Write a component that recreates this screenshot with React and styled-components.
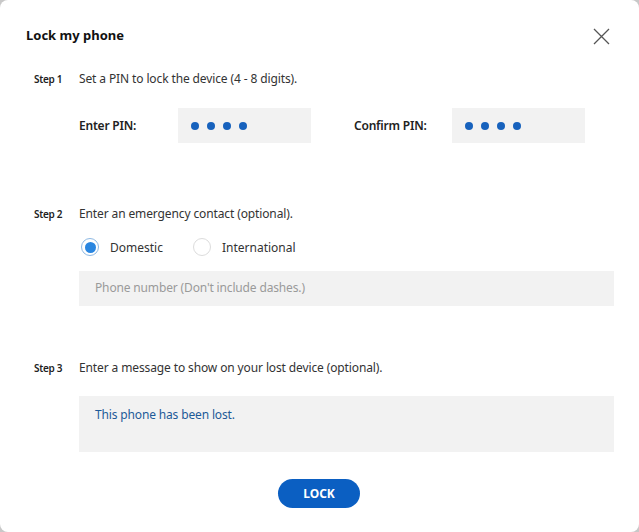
import React from "react";
import styled, { createGlobalStyle } from "styled-components";

const Global = createGlobalStyle`
  html, body { margin: 0; padding: 0; background: #c8c8c8; }
  body { font-family: "Noto Sans", Roboto, sans-serif; color: #252525; }
  * { box-sizing: border-box; }
`;

const Dialog = styled.div`
  width: 639px;
  height: 532px;
  background: #fff;
  border-radius: 8px;
  padding: 25px 29px 0 26px;
  display: flex;
  flex-direction: column;
`;

const Header = styled.div`
  display: flex;
  align-items: center;
  justify-content: space-between;
  height: 20px;
`;

const Title = styled.h1`
  margin: 0;
  font-size: 13px;
  font-weight: 700;
  line-height: 20px;
  color: #111;
`;

const CloseBtn = styled.button`
  width: 17px;
  height: 17px;
  padding: 0;
  border: 0;
  background: none;
  margin-top: 2px;
  display: flex;
`;

const Step = styled.section`
  display: grid;
  grid-template-columns: 45px 1fr;
  margin-left: 8px;
  margin-top: ${(p) => p.$top}px;
`;

const StepLabel = styled.div`
  font-size: 10px;
  font-weight: 600;
  line-height: 18px;
  color: #222;
  letter-spacing: -0.3px;
`;

const StepText = styled.div`
  font-size: 12px;
  line-height: 18px;
  color: #333;
  letter-spacing: -0.12px;
`;

const Content = styled.div`
  grid-column: 2;
  margin-top: ${(p) => p.$top}px;
`;

const PinRow = styled.div`
  display: flex;
  align-items: center;
  height: 35px;
`;

const PinLabel = styled.label`
  width: ${(p) => p.$w}px;
  font-size: 12px;
  font-weight: 600;
  color: #222;
  letter-spacing: -0.2px;
`;

const PinBox = styled.div`
  width: 133px;
  height: 35px;
  background: #f2f2f2;
  display: flex;
  align-items: center;
  gap: 8px;
  padding-left: 13px;
  margin-right: ${(p) => p.$mr || 0}px;
`;

const Dot = styled.span`
  width: 8px;
  height: 8px;
  border-radius: 50%;
  background: #1762bd;
`;

const RadioRow = styled.div`
  display: flex;
  align-items: center;
  height: 18px;
  padding-left: 2px;
`;

const Radio = styled.span`
  width: 18px;
  height: 18px;
  border-radius: 50%;
  border: 1.5px solid ${(p) => (p.$on ? "#8db8e3" : "#dcdcdc")};
  display: flex;
  align-items: center;
  justify-content: center;
  margin-right: 11px;
  &::after {
    content: "";
    width: 11px;
    height: 11px;
    border-radius: 50%;
    background: ${(p) => (p.$on ? "#2a86e0" : "transparent")};
  }
`;

const RadioText = styled.span`
  font-size: 12px;
  color: #333;
  margin-right: ${(p) => p.$mr || 0}px;
`;

const Field = styled.div`
  width: 535px;
  height: ${(p) => p.$h}px;
  background: #f2f2f2;
  padding: ${(p) => p.$pt}px 16px 0;
  font-size: 12px;
  line-height: 18px;
  letter-spacing: -0.15px;
  color: ${(p) => p.$color};
`;

const Footer = styled.div`
  display: flex;
  justify-content: center;
  margin-top: 27px;
  padding-left: 2px;
`;

const LockBtn = styled.button`
  width: 82px;
  height: 29px;
  border: 0;
  border-radius: 15px;
  background: #0b5fc2;
  color: #fff;
  font-family: inherit;
  font-size: 12px;
  font-weight: 700;
`;

export default function App() {
  return (
    <>
      <Global />
      <Dialog>
        <Header>
          <Title>Lock my phone</Title>
          <CloseBtn aria-label="Close">
            <svg width="17" height="17" viewBox="0 0 17 17">
              <path d="M1 1L16 16M16 1L1 16" stroke="#555" strokeWidth="1.3" fill="none" />
            </svg>
          </CloseBtn>
        </Header>

        <Step $top={25}>
          <StepLabel>Step 1</StepLabel>
          <StepText>Set a PIN to lock the device (4 - 8 digits).</StepText>
          <Content $top={20}>
            <PinRow>
              <PinLabel $w={99}>Enter PIN:</PinLabel>
              <PinBox $mr={43}>
                <Dot /><Dot /><Dot /><Dot />
              </PinBox>
              <PinLabel $w={98}>Confirm PIN:</PinLabel>
              <PinBox>
                <Dot /><Dot /><Dot /><Dot />
              </PinBox>
            </PinRow>
          </Content>
        </Step>

        <Step $top={62}>
          <StepLabel>Step 2</StepLabel>
          <StepText>Enter an emergency contact (optional).</StepText>
          <Content $top={15}>
            <RadioRow>
              <Radio $on />
              <RadioText $mr={30}>Domestic</RadioText>
              <Radio />
              <RadioText>International</RadioText>
            </RadioRow>
          </Content>
          <Content $top={15}>
            <Field $h={35} $pt={8} $color="#9a9a9a">Phone number (Don't include dashes.)</Field>
          </Content>
        </Step>

        <Step $top={53}>
          <StepLabel>Step 3</StepLabel>
          <StepText>Enter a message to show on your lost device (optional).</StepText>
          <Content $top={19}>
            <Field $h={56} $pt={10} $color="#1d5a98">This phone has been lost.</Field>
          </Content>
        </Step>

        <Footer>
          <LockBtn>LOCK</LockBtn>
        </Footer>
      </Dialog>
    </>
  );
}
